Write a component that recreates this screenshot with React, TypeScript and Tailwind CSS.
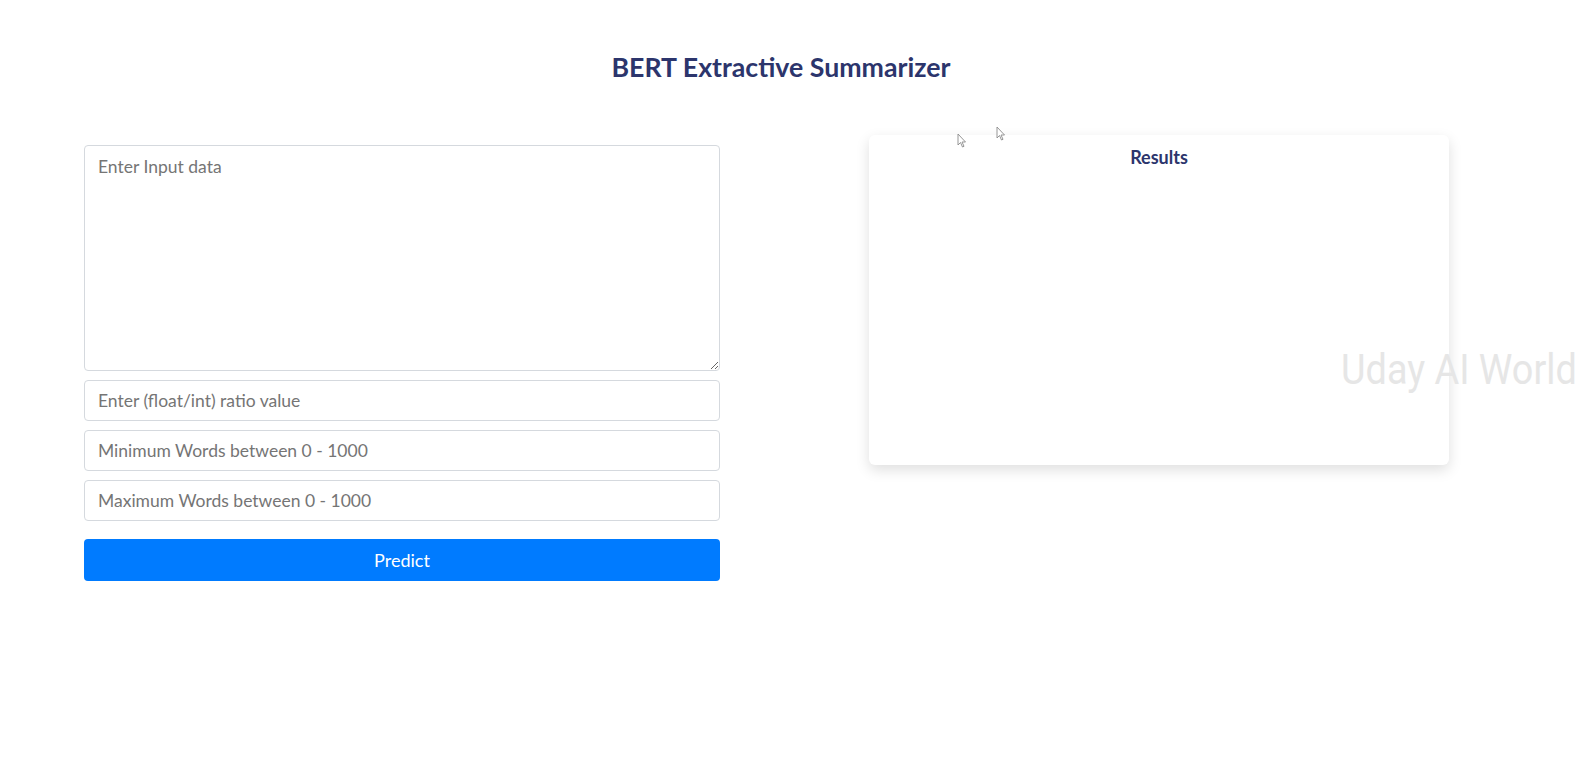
import React from 'react';

const Cursor: React.FC<{ className?: string }> = ({ className }) => (
    <svg className={className} width="10" height="16" viewBox="0 0 10 16" fill="none">
        <path d="M1 1 L1 12 L3.5 9.5 L5.5 14 L7 13.3 L5 9 L8.5 9 Z" fill="white" stroke="#8a8a8a" strokeWidth="0.9" strokeLinejoin="round" />
    </svg>
);

const fieldClass =
    "w-full h-[41px] rounded-[4px] border border-[#d5d9de] bg-white px-[13px] text-[17.5px] text-[#495057] placeholder:text-[#757575] focus:outline-none";

export default function App() {
    return (
        <div className="relative min-h-[769px] w-full bg-white overflow-hidden" style={{ fontFamily: 'Lato, "Open Sans", sans-serif' }}>
            {/* Title */}
            <h1 className="pt-[52px] pr-[22px] text-center text-[26.7px] font-bold text-[#2c356c] leading-[30px]">
                BERT Extractive Summarizer
            </h1>

            <div className="mt-[53px] flex items-start pl-[84px]">
                {/* Form column */}
                <div className="w-[636px] mt-[10px] flex flex-col">
                    <textarea
                        placeholder="Enter Input data"
                        className="w-full h-[226px] rounded-[4px] border border-[#d5d9de] bg-white px-[13px] py-[8px] text-[17.5px] leading-[26px] text-[#495057] placeholder:text-[#757575] focus:outline-none"
                    />
                    <div className="mt-[9px] flex flex-col gap-[9px]">
                        <input placeholder="Enter (float/int) ratio value" className={fieldClass} />
                        <input placeholder="Minimum Words between 0 - 1000" className={fieldClass} />
                        <input placeholder="Maximum Words between 0 - 1000" className={fieldClass} />
                    </div>
                    <button className="mt-[18px] h-[42px] w-full rounded-[4px] bg-[#007bff] text-[18px] text-white">
                        Predict
                    </button>
                </div>

                {/* Results card */}
                <div className="ml-[149px] w-[580px] h-[330px] rounded-[6px] bg-white shadow-[0_5px_14px_rgba(0,0,0,0.13)]">
                    <h2 className="pt-[9px] text-center text-[18px] font-bold text-[#2c356c]">Results</h2>
                </div>
            </div>

            {/* Watermark */}
            <div
                className="absolute left-[1341px] top-[337px] text-[43px] text-[#e6e6e6] whitespace-nowrap origin-left scale-x-[0.88] pointer-events-none"
                style={{ fontFamily: 'Roboto, sans-serif' }}
            >
                Uday AI World
            </div>

            {/* stray cursors from the capture */}
            <Cursor className="absolute left-[957px] top-[133px]" />
            <Cursor className="absolute left-[996px] top-[126px]" />
        </div>
    );
}
